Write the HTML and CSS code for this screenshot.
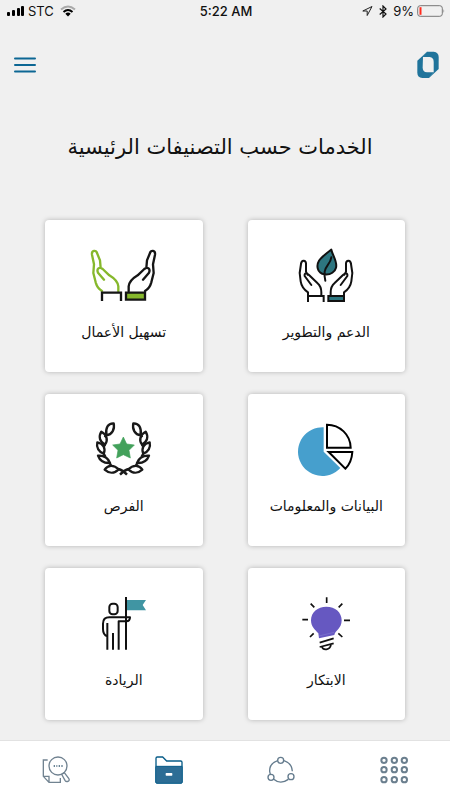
FILE: index.html
```
<!DOCTYPE html>
<html lang="ar" dir="rtl">
<head>
<meta charset="utf-8">
<meta name="viewport" content="width=device-width, initial-scale=1">
<title>الخدمات</title>
<link rel="stylesheet" href="styles.css">
</head>
<body>
<div class="status" dir="ltr">
  <div class="status-side">
    <svg width="18" height="12" viewBox="0 0 18 12"><rect x="0" y="7" width="3" height="4" rx="1"/><rect x="5" y="5" width="3" height="6" rx="1"/><rect x="10" y="3" width="3" height="8" rx="1"/><rect x="14" y="1" width="3" height="10" rx="1"/></svg>
    <span>STC</span>
    <svg class="wifi" width="16" height="12" viewBox="0 0 16 12"><path d="M1 4.500Q8-1.500 15 4.500" fill="none" stroke="#aaa" stroke-width="2"/><path d="M3.500 7Q8 3 12.500 7" fill="none" stroke="#000" stroke-width="2"/><path d="M5.300 8.700Q8 6.500 10.700 8.700L8 11.500Z"/></svg>
  </div>
  <div class="status-time">5:22 AM</div>
  <div class="status-side status-end">
    <svg width="11" height="12" viewBox="0 0 11 12"><path d="M10 1.500L.8 6H5.200V10.500Z" fill="none" stroke="#222" stroke-linejoin="round"/></svg>
    <svg class="bluetooth" width="8" height="13" viewBox="0 0 8 13"><path d="M.7 3.500L7 9 4 12V1L7 4 .7 9.500" fill="none" stroke="#111" stroke-width="1.200"/></svg>
    <span>9%</span>
    <svg width="28" height="12" viewBox="0 0 28 12"><rect x=".7" y=".7" width="24.600" height="10.600" rx="2.500" fill="none" stroke="#777"/><rect x="2.500" y="2.200" width="2" height="7.600" fill="#ff2a1c"/><path d="M26.500 4V8Q28 6 26.500 4" fill="#888"/></svg>
  </div>
</div>

<header class="header">
  <a class="brand" href="#" aria-label="الرئيسية">
    <svg width="22" height="28" viewBox="0 0 66 84"><path d="M30 2H50Q65 4 65 18V54L36 81H16Q1 79 1 65V29Z" fill="#20749b"/><path d="M18 18H38Q50 20 50 32V64H30Q17 62 17 50Z" fill="#f0f0f0"/><path d="M30 2L17 17M50 64L36 81" stroke="#7fa9bf" stroke-width="1"/></svg>
  </a>
  <button class="menu" type="button" aria-label="القائمة">
    <svg width="22" height="16" viewBox="0 0 22 16"><path d="M1 1.500H21M1 8H21M1 14.500H21" stroke="#0c6794" stroke-width="2" stroke-linecap="round"/></svg>
  </button>
</header>

<main class="main">
  <h1 class="title">الخدمات حسب التصنيفات الرئيسية</h1>
  <div class="grid">
    <a class="card" href="#">
      <svg class="art" viewBox="3 0 270 198" fill="none" stroke="#111" stroke-width="6" stroke-linejoin="round" stroke-linecap="round">
        <path d="M134 103C110 100 109 75 117 62C124 51 137 42 154 29C158 47 173 66 168 83C165 95 153 105 134 103Z" fill="#2d7680"/>
        <path d="M154 52C151 73 137 76 134 95C133 105 134 115 136 122"/>
        <g id="care-hand"><path d="M84 165V157Q65 144 62 124L59 99L63 72C64 59 77 59 78 70V95L83 104M94 135L74 108C72 98 81 99 87 105L112 129Q124 139 124 157V165"/></g>
        <use href="#care-hand" transform="matrix(-1 0 0 1 276 0)"/>
        <g stroke-linecap="butt" stroke-linejoin="miter"><path d="M84 186V168H131V186"/><path d="M145 183V168H192V183Z" fill="#2d7680"/></g>
      </svg>
      <span class="label">الدعم والتطوير</span>
    </a>
    <a class="card" href="#">
      <svg class="art" viewBox="-3 0 270 198" fill="none" stroke="#151515" stroke-width="7" stroke-linejoin="round" stroke-linecap="round">
        <path stroke="#86b82c" d="M66 153Q52 145 47 127L40 99L42 73L36 44C34 31 49 29 51 39L60 61L62 84M72 119L54 98C49 87 58 79 68 87L88 106Q113 121 115 139V154"/>
        <path d="M195 153Q209 145 214 127L221 99L219 73L225 44C227 31 212 29 210 39L201 61L199 84M189 119L207 98C212 87 203 79 193 87L173 106Q148 121 146 139V154"/>
        <g stroke-linecap="butt" stroke-linejoin="miter"><path d="M66 183V158H123V183"/><path d="M138 179V158H195V179Z" fill="#86b82c"/></g>
      </svg>
      <span class="label">تسهيل الأعمال</span>
    </a>
    <a class="card" href="#">
      <svg class="art" viewBox="63 12 270 198" fill="none" stroke="#000" stroke-width="6">
        <path d="M191 52V125L241 174A73 73 0 1 1 191 52Z" fill="#469fcd" stroke="none"/>
        <path d="M201 44V113H272A71 70 0 0 0 201 44ZM206 126H277Q275 158 256 176Z"/>
      </svg>
      <span class="label">البيانات والمعلومات</span>
    </a>
    <a class="card" href="#">
      <svg class="art" viewBox="-3 12 270 198" fill="none" stroke="#191919" stroke-width="7" stroke-linejoin="round">
        <path d="M130 81L140 102L163 105L147 121L151 144L130 134L110 144L114 121L98 105L120 102Z" fill="#43a15b" stroke="#43a15b" stroke-width="2"/>
        <g id="laurel">
          <path d="M101 40C84 39 76 54 79 76C96 74 105 58 101 40Z"/>
          <path d="M64 65C54 81 60 96 75 104C86 89 79 73 64 65Z"/>
          <path d="M52 97C48 113 57 126 71 131C78 115 70 101 52 97Z"/>
          <path d="M54 137C60 154 72 160 90 159C84 143 71 136 54 137Z"/>
          <path d="M74 179C83 165 101 163 116 178C103 191 87 191 74 179Z"/>
          <path d="M79 76L74 82M75 104L71 111M71 131L76 140M89 159L93 166M115 177Q128 180 141 194"/>
        </g>
        <use href="#laurel" transform="matrix(-1 0 0 1 261 0)"/>
      </svg>
      <span class="label">الفرص</span>
    </a>
    <a class="card" href="#">
      <svg class="art" viewBox="3 9 270 198" fill="none" stroke="#111" stroke-width="6">
        <path d="M117 160L115 145C105 134 93 125 93 106C93 81 113 65 139 65C166 65 185 82 185 106C185 131 166 136 163 150Z" fill="#6658c1" stroke="none"/>
        <path d="M117 153L162 142" stroke="#8278d0" stroke-width="2"/>
        <path d="M140 37V54M92 56L103 67M187 56L176 67M67 104H84M192 106H210M90 156L101 145M175 145L187 156" stroke-width="5"/>
        <path d="M119 173L161 160M119 186L161 175M126 186C129 196 150 197 153 179" stroke-width="5"/>
      </svg>
      <span class="label">الابتكار</span>
    </a>
    <a class="card" href="#">
      <svg class="art" viewBox="-3 9 270 198" fill="none" stroke="#111" stroke-width="6" stroke-linejoin="round">
        <path d="M141 45H198L188 60L198 76H141Z" fill="#4095a3" stroke="none"/>
        <path d="M138 36V194"/>
        <rect x="88" y="56" width="25" height="32" rx="10"/>
        <path d="M82 154Q69 150 69 132V116Q69 97 88 97H150Q150 109 139 109H116V194M82 114V194M99 144V194"/>
      </svg>
      <span class="label">الريادة</span>
    </a>
  </div>
</main>

<nav class="tabs" aria-label="التنقل">
  <a class="tab" href="#" aria-label="المزيد">
    <svg width="28" height="28" viewBox="0 0 84 84" fill="none" stroke="#6b7f8e" stroke-width="6"><circle cx="12" cy="13" r="8"/><circle cx="43" cy="13" r="8"/><circle cx="73" cy="13" r="8"/><circle cx="12" cy="41" r="8"/><circle cx="43" cy="41" r="8"/><circle cx="73" cy="41" r="8"/><circle cx="12" cy="71" r="8"/><circle cx="43" cy="71" r="8"/><circle cx="73" cy="71" r="8"/></svg>
  </a>
  <a class="tab" href="#" aria-label="المشاركة">
    <svg width="28" height="28" viewBox="0 0 84 84" fill="none" stroke="#647b8d" stroke-width="4"><path d="M32 14Q7 22 8 46L10 55M51 14Q75 22 76 46M19 69Q40 87 64 70"/><circle cx="41" cy="13" r="9"/><circle cx="12" cy="64" r="9"/><circle cx="72" cy="62" r="9"/></svg>
  </a>
  <a class="tab" href="#" aria-label="الخدمات" aria-current="page">
    <svg width="28" height="28" viewBox="0 0 84 84"><path d="M3 31V7Q3 3 7 3H23L35 15H77Q81 15 81 19V31" fill="#fff" stroke="#075c88" stroke-width="4"/><path d="M2 31H82V78Q82 82 78 82H6Q2 82 2 78Z" fill="#2c6d95" stroke="#075c88" stroke-width="3"/><rect x="32" y="51" width="20" height="8" rx="2" fill="#fff"/></svg>
  </a>
  <a class="tab" href="#" aria-label="البحث">
    <svg width="28" height="28" viewBox="0 0 84 84" fill="none" stroke="#718391" stroke-width="4"><path d="M17 12H4V61L21 79H55V66M4 61H21V79"/><circle cx="48" cy="30" r="27" fill="#fff"/><path d="M59 55L67 50L80 67Q84 73 78 76Q72 78 69 73Z"/><path d="M35 30H39M43 30H46M50 30H54M58 30H62" stroke="#375970"/></svg>
  </a>
</nav>
</body>
</html>
```

FILE: styles.css
```
* {
  box-sizing: border-box;
}

body {
  margin: 0;
  min-height: 100vh;
  display: flex;
  flex-direction: column;
  background: #f0f0f0;
  color: #111;
  font-family: "DejaVu Sans", sans-serif;
}

a {
  color: inherit;
  text-decoration: none;
}

svg {
  display: block;
}

.status {
  display: flex;
  align-items: center;
  height: 22px;
  padding: 0 5px 0 7px;
  font: 13px/22px Inter, sans-serif;
}

.status-side {
  flex: 1;
  display: flex;
  align-items: center;
  gap: 3px;
}

.status-end {
  justify-content: flex-end;
}

.status-time {
  font-weight: 500;
}

.wifi {
  margin-left: 3px;
}

.bluetooth {
  margin: 0 3px;
}

.header {
  display: flex;
  align-items: center;
  justify-content: space-between;
  padding: 29px 11px 0;
}

.menu {
  border: 0;
  padding: 6px 3px;
  background: none;
}

.title {
  margin: 51px 0 56px;
  padding: 0 55px 0 45px;
  text-align: center;
  font-size: 21px;
  line-height: 34px;
  font-weight: 400;
}

.grid {
  display: grid;
  grid-template-columns: 1fr 1fr;
  gap: 22px 45px;
  padding: 0 45px 20px;
}

.card {
  display: flex;
  flex-direction: column;
  align-items: center;
  gap: 14px;
  padding: 20px 8px 28px;
  border-radius: 4px;
  background: #fff;
  box-shadow: 0 0 5px rgba(0, 0, 0, 0.25);
}

.art {
  width: 90px;
  height: 66px;
  overflow: visible;
}

.label {
  font-size: 14px;
  line-height: 24px;
  white-space: nowrap;
}

.tabs {
  display: flex;
  margin-top: auto;
  border-top: 1px solid #e2e2e2;
  background: #fff;
}

.tab {
  flex: 1;
  display: flex;
  justify-content: center;
  padding: 15px 0 16px;
}
```
